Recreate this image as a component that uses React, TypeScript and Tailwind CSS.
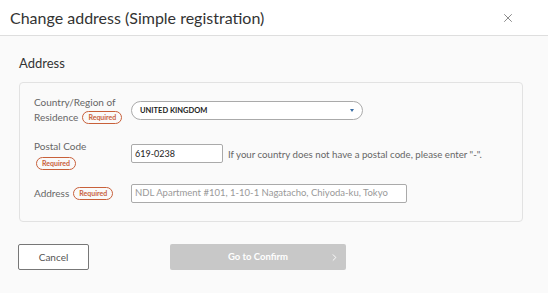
import { ChevronRight, X } from 'lucide-react';

function Required() {
  return (
    <span className="inline-flex items-center h-[13px] px-[5px] rounded-full border border-[#c8603a] text-[#c8603a] text-[7px] font-bold leading-none">
      Required
    </span>
  );
}

export default function App() {
  return (
    <div className="w-[548px] h-[293px] bg-[#fafafa] text-[#333] font-['Lato',sans-serif] overflow-hidden">
      <div className="h-[36px] bg-white border-b border-[#dedede] flex items-center justify-between pl-[10px] pr-[33px]">
        <h1 className="text-[16px] text-[#333]">Change address (Simple registration)</h1>
        <X className="w-[14px] h-[14px] text-[#666]" strokeWidth={1.3} />
      </div>

      <div className="px-[18px] pt-[18px]">
        <h2 className="text-[13px] leading-[18px] pl-[1px]">Address</h2>

        <div className="mt-[10px] ml-[1px] w-[504px] h-[140px] border border-[#e2e2e2] rounded-[4px] bg-[#fafafa] pl-[14px] pt-[12px]">
          <div className="flex items-start">
            <div className="w-[97px] text-[10px] leading-[15px] text-[#666]">
              <div>Country/Region of</div>
              <div className="flex items-center gap-[4px]">
                Residence <Required />
              </div>
            </div>
            <div className="mt-[6px] w-[232px] h-[19px] rounded-full border border-[#aaa] bg-white flex items-center justify-between pl-[8px] pr-[8px]">
              <span className="text-[7.5px] font-bold text-[#222]">UNITED KINGDOM</span>
              <span className="w-0 h-0 border-l-[2.5px] border-r-[2.5px] border-t-[3px] border-l-transparent border-r-transparent border-t-[#3a6ea5]" />
            </div>
          </div>

          <div className="flex items-start mt-[14px]">
            <div className="w-[97px] text-[10px] leading-[15px] text-[#666]">
              <div>Postal Code</div>
              <div className="pl-[2px] mt-[1px]"><Required /></div>
            </div>
            <div className="mt-[5px] w-[92px] h-[19px] border border-[#aaa] rounded-[2px] bg-white flex items-center px-[3px] text-[9px] text-[#222]">
              619-0238
            </div>
            <span className="mt-[9px] ml-[5px] text-[9.7px] text-[#666] leading-[12px]">
              If your country does not have a postal code, please enter "-".
            </span>
          </div>

          <div className="flex items-center mt-[14px]">
            <div className="w-[97px] text-[10px] text-[#666] flex items-center gap-[4px]">
              Address <Required />
            </div>
            <div className="w-[276px] h-[19px] border border-[#aaa] rounded-[2px] bg-white flex items-center px-[3px] text-[9.5px] text-[#999]">
              NDL Apartment #101, 1-10-1 Nagatacho, Chiyoda-ku, Tokyo
            </div>
          </div>
        </div>

        <div className="flex items-center mt-[22px]">
          <button className="w-[71px] h-[26px] border border-[#777] rounded-[2px] bg-white text-[10px] text-[#555]">
            Cancel
          </button>
          <button className="ml-[81px] w-[176px] h-[26px] rounded-[2px] bg-[#c8c8c8] text-white text-[9.5px] font-bold relative flex items-center justify-center">
            Go to Confirm
            <ChevronRight className="absolute right-[6px] w-[11px] h-[11px]" strokeWidth={2} />
          </button>
        </div>
      </div>
    </div>
  );
}
